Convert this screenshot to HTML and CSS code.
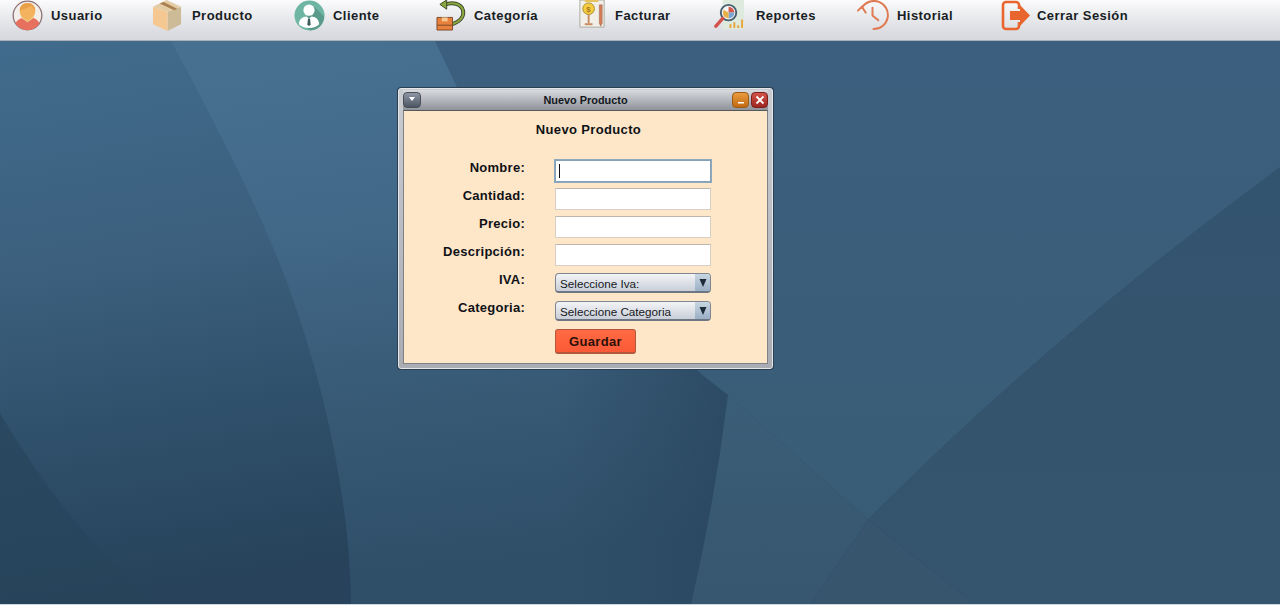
FILE: index.html
```html
<!DOCTYPE html>
<html lang="es">
<head>
<meta charset="utf-8">
<title>Nuevo Producto</title>
<link rel="stylesheet" href="styles.css">
</head>
<body>
<header class="menubar">
  <a class="menu-item"><svg class="icon" viewBox="0 0 32 32"><circle cx="16" cy="16" r="14.8" fill="#f3eee9" stroke="#8b6f72" stroke-width="1.300"/><path d="M3.500 24c2-4 6-5 8-6h9c3 1 6 2 8 6a14.500 14.500 0 0 1-25 0z" fill="#e8705f"/><path d="M9 18l7 5 7-5-2-3H11z" fill="#efd08f"/><path d="M8 11c0-5 3.500-8 8-8s8 3 8 8c0 3-1 5-2 6l-6 5-6-5c-1-1-2-3-2-6z" fill="#f3b25e"/><path d="M8 11c0-5 3.500-8 8-8s8 3 8 8c-2-2-3-4-4-5-3 2-8 3-12 5z" fill="#e99f48"/></svg><span>Usuario</span></a>
  <a class="menu-item menu-gap-9"><svg class="icon" viewBox="0 0 32 32"><path d="M16 12l14-5v18l-14 7z" fill="#cdbb98"/><path d="M16 12L1 7v18l15 7z" fill="#f6c891"/><path d="M1 7l14-7 15 7-14 5z" fill="#e3cba4"/><path d="M8 3.500l15 7 3-1.500-14-7z" fill="#a9804f"/></svg><span>Producto</span></a>
  <a class="menu-item"><svg class="icon" viewBox="0 0 32 32"><circle cx="16" cy="16" r="15.500" fill="#6fb5a3"/><path d="M21 7l10 10c0 8-6 14-14 14.500L8 24z" fill="#5a9a8b"/><circle cx="15.500" cy="10.500" r="5.800" fill="#fff"/><path d="M5 25c0-5 4-8 8-8l2.500 2 2.500-2c4 0 8 3 8 8-2 2-6 4-10.500 4S7 27 5 25z" fill="#fff"/><path d="M14.500 19h2l.7 6-1.700 2-1.700-2z" fill="#3d5c5c"/></svg><span>Cliente</span></a>
  <a class="menu-item menu-gap-7"><svg class="icon" viewBox="0 0 32 32"><path d="M9 5c7-3 17-2 19 6 1 6-3 11-11 14" fill="none" stroke="#3f4a2c" stroke-width="4"/><path d="M9 5c7-3 17-2 19 6 1 6-3 11-11 14" fill="none" stroke="#8ba83f" stroke-width="2"/><path d="M11 0L4 4.500l7 5z" fill="#8ba83f" stroke="#3f4a2c"/><path d="M1 18h16v13H1z" fill="#e9813c" stroke="#7b4a2b"/><path d="M1 26h16" stroke="#7b4a2b"/><path d="M6 18h6v4H6z" fill="#f6c891"/></svg><span>Categoría</span></a>
  <a class="menu-item menu-gap-7"><svg class="icon" viewBox="0 0 32 32"><path d="M3 0h25v28H3z" fill="#f2efe8" stroke="#a9a9a0"/><path d="M8 0h14v2H8z" fill="#e6c25a"/><circle cx="12" cy="9" r="6" fill="#f3cc3f" stroke="#a98d30"/><text class="coin" x="12" y="12" text-anchor="middle">$</text><path d="M11 15h2v9h-2z" fill="#c98b62"/><path d="M8 24h8v2H8z" fill="#c98b62"/><path d="M23 5h3v19l-1.500 3-1.500-3z" fill="#d77a56" stroke="#8a6a55" stroke-width=".5"/></svg><span>Facturar</span></a>
  <a class="menu-item menu-gap-11"><svg class="icon" viewBox="0 0 32 32"><path d="M9 0h22v30H9z" fill="#dfeadf"/><path d="M17 25v4M21 23v6M25 26v3M29 20v9" stroke="#e8a33d" stroke-width="2"/><circle cx="15" cy="13" r="8" fill="#f5f6f8" stroke="#49606f" stroke-width="2"/><path d="M15 13V7a6 6 0 0 1 6 6z" fill="#d7574a"/><path d="M15 13h6a6 6 0 0 1-6 6z" fill="#7aa6cf"/><path d="M15 13v6a6 6 0 0 1-5-9z" fill="#eab04a"/><path d="M9 19l-7 8" stroke="#d2534c" stroke-width="3.500" stroke-linecap="round"/></svg><span>Reportes</span></a>
  <a class="menu-item"><svg class="icon icon-wide" viewBox="0 0 32 32"><path d="M5 8A14.500 14.500 0 1 1 17 30" fill="none" stroke="#e07a52" stroke-width="2" stroke-linecap="round"/><path d="M1 11l4-4 4 6" fill="none" stroke="#e07a52" stroke-width="2" stroke-linecap="round"/><path d="M16 8v8l6 5" fill="none" stroke="#e07a52" stroke-width="2" stroke-linecap="round"/></svg><span>Historial</span></a>
  <a class="menu-item menu-gap-7"><svg class="icon icon-narrow" viewBox="0 0 29 31"><path d="M18 9V5a3 3 0 0 0-3-3H5a3 3 0 0 0-3 3v21a3 3 0 0 0 3 3h10a3 3 0 0 0 3-3v-4" fill="none" stroke="#e8662e" stroke-width="2.600"/><path d="M9 11h10V5l10 10.500L19 26v-6H9z" fill="#e8662e"/></svg><span>Cerrar Sesión</span></a>
</header>
<main class="desktop">
  <svg class="wallpaper" viewBox="0 0 1280 563" preserveAspectRatio="none">
    <defs>
      <linearGradient id="base" gradientUnits="userSpaceOnUse" x1="0" y1="0" x2="90" y2="563">
        <stop offset="0" stop-color="#416b8c"/>
        <stop offset="0.4" stop-color="#3c607e"/>
        <stop offset="0.7" stop-color="#2f506b"/>
        <stop offset="1" stop-color="#27425a"/>
      </linearGradient>
      <linearGradient id="mid" gradientUnits="userSpaceOnUse" x1="0" y1="0" x2="60" y2="563">
        <stop offset="0" stop-color="#487191"/>
        <stop offset="0.4" stop-color="#426888"/>
        <stop offset="0.65" stop-color="#395c78"/>
        <stop offset="1" stop-color="#2f4f69"/>
      </linearGradient>
      <linearGradient id="shade" gradientUnits="userSpaceOnUse" x1="560" y1="0" x2="728" y2="0">
        <stop offset="0" stop-color="#294660" stop-opacity="0"/>
        <stop offset="1" stop-color="#294660" stop-opacity="0.75"/>
      </linearGradient>
      <linearGradient id="upper" gradientUnits="userSpaceOnUse" x1="0" y1="0" x2="0" y2="480">
        <stop offset="0" stop-color="#3c5f7f"/>
        <stop offset="1" stop-color="#395c76"/>
      </linearGradient>
      <linearGradient id="band" gradientUnits="userSpaceOnUse" x1="0" y1="354" x2="0" y2="563">
        <stop offset="0" stop-color="#3b5e78"/>
        <stop offset="1" stop-color="#37566f"/>
      </linearGradient>
      <linearGradient id="lower" gradientUnits="userSpaceOnUse" x1="0" y1="126" x2="0" y2="563">
        <stop offset="0" stop-color="#33546f"/>
        <stop offset="1" stop-color="#35546d"/>
      </linearGradient>
    </defs>
    <rect width="1280" height="563" fill="url(#base)"/>
    <path d="M171 0C225 100 270 190 294 261 325 350 350 460 351 563H691Q715 460 728 354L705 336Q560 210 457 46L435 0z" fill="url(#mid)"/>
    <path d="M351 563H691Q715 460 728 354L705 336Q640 280 560 190L500 563z" fill="url(#shade)"/>
    <path d="M435 0H1280V126Q1050 295 868 479L728 354 705 336Q560 210 457 46z" fill="url(#upper)"/>
    <path d="M728 354L868 479 811 563H691Q715 460 728 354z" fill="url(#band)"/>
    <path d="M1280 126Q1050 295 868 479L975 563H1280z" fill="url(#lower)"/>
    <path d="M868 479L811 563H975z" fill="#37566e"/>
    <path d="M0 372Q70 490 155 563H0z" fill="#27445a" fill-opacity="0.6"/>
  </svg>
  <section class="window">
    <div class="titlebar">
      <div class="title-side"><button class="win-btn win-menu"><svg viewBox="0 0 10 6"><path d="M2 0h6L5 4z" fill="#fff"/></svg></button></div>
      <span class="win-title">Nuevo Producto</span>
      <div class="title-side title-side-end">
        <button class="win-btn win-min"><svg viewBox="0 0 10 10"><path d="M2 7h6v1.500H2z" fill="#fff"/></svg></button>
        <button class="win-btn win-close"><svg viewBox="0 0 10 10"><path d="M1.500 1.500l7 7m0-7l-7 7" stroke="#fff" stroke-width="1.800"/></svg></button>
      </div>
    </div>
    <div class="win-body">
      <h1 class="form-title">Nuevo Producto</h1>
      <form class="form-grid">
        <label class="form-label">Nombre:</label>
        <div class="field field-focus"><span class="caret"></span></div>
        <label class="form-label">Cantidad:</label>
        <div class="field"></div>
        <label class="form-label">Precio:</label>
        <div class="field"></div>
        <label class="form-label">Descripción:</label>
        <div class="field"></div>
        <label class="form-label">IVA:</label>
        <div class="select"><span class="select-text">Seleccione Iva:</span><span class="select-arrow"><svg viewBox="0 0 8 8"><path d="M0.500 0h7L4 8z" fill="#1d2a38"/></svg></span></div>
        <label class="form-label">Categoria:</label>
        <div class="select"><span class="select-text">Seleccione Categoria</span><span class="select-arrow"><svg viewBox="0 0 8 8"><path d="M0.500 0h7L4 8z" fill="#1d2a38"/></svg></span></div>
        <span></span>
        <button class="save" type="button">Guardar</button>
      </form>
    </div>
  </section>
</main>
<div class="page-end"></div>
</body>
</html>
```
FILE: styles.css
```css
* { box-sizing: border-box; }
html, body { height: 609px; }
body {
  margin: 0;
  display: flex;
  flex-direction: column;
  overflow: hidden;
  font-family: "Liberation Sans", Arial, sans-serif;
  background: #fff;
}
.menubar {
  height: 41px;
  flex: none;
  display: grid;
  grid-template-columns: 140px 142px 142px 141px 137px 142px 145px 200px;
  align-items: start;
  padding-left: 12px;
  background: linear-gradient(#fbfbfc 0%, #eeeff1 30%, #dcdde2 80%, #d6d8de 100%);
  border-bottom: 1px solid #a9b0b7;
}
.menu-item {
  display: flex;
  align-items: center;
  gap: 8px;
  font-size: 13px;
  font-weight: 700;
  letter-spacing: 0.45px;
  color: #181d24;
}
.menu-gap-7 { gap: 7px; }
.menu-gap-9 { gap: 9px; }
.menu-gap-11 { gap: 11px; }
.icon { width: 31px; height: 31px; flex: none; }
.icon-wide { width: 33px; }
.icon-narrow { width: 29px; }
.coin { font: 700 8px "Liberation Sans", Arial, sans-serif; fill: #a9761f; }
.desktop { position: relative; flex: 1; overflow: hidden; }
.wallpaper { position: absolute; inset: 0; width: 100%; height: 100%; display: block; }
.window {
  position: absolute;
  left: 398px;
  top: 47px;
  width: 375px;
  height: 281px;
  padding: 1px 4px 4px;
  display: flex;
  flex-direction: column;
  background: linear-gradient(#c9ccd1, #a9adb3);
  border: 1px solid #e4e6e9;
  border-radius: 3px;
  box-shadow: 0 0 0 1px #2b3f52;
}
.titlebar {
  height: 20px;
  flex: none;
  display: grid;
  grid-template-columns: 1fr auto 1fr;
  align-items: center;
  background: linear-gradient(#d8dade, #8f939a);
}
.title-side { display: flex; gap: 2px; }
.title-side-end { justify-content: flex-end; }
.win-btn {
  width: 17px;
  height: 16px;
  padding: 0;
  display: flex;
  align-items: center;
  justify-content: center;
  border: 1px solid #4a4f57;
  border-radius: 4px;
}
.win-btn svg { width: 10px; height: 10px; display: block; }
.win-menu { width: 18px; background: linear-gradient(#8f97a6, #4d5462); }
.win-min { background: linear-gradient(#e99a3f, #c26a12); border-color: #9c5c16; }
.win-close { background: linear-gradient(#d2544a, #9c2620); border-color: #7e1f1b; }
.win-title {
  font-size: 10.900px;
  font-weight: 700;
  color: #14181d;
}
.win-body {
  flex: 1;
  background: #fee6c9;
  border: 1px solid #7d8287;
  border-top-color: #55595e;
  padding-top: 11px;
}
.form-title {
  margin: 0 0 22px;
  padding-left: 6px;
  height: 16px;
  line-height: 16px;
  text-align: center;
  font-size: 13px;
  font-weight: 700;
  letter-spacing: 0.35px;
  color: #0f1216;
}
.form-grid {
  display: grid;
  grid-template-columns: 121px 156px;
  grid-auto-rows: 22px;
  row-gap: 6px;
  column-gap: 30px;
}
.form-label {
  font-size: 13px;
  line-height: 15px;
  font-weight: 700;
  letter-spacing: 0.27px;
  text-align: right;
  color: #0f1216;
}
.field {
  background: #fff;
  border: 1px solid #d6cfc3;
  border-top-color: #bdb7ab;
  display: flex;
  align-items: center;
  padding-left: 3px;
}
.field-focus {
  border: 1px solid #86a2b8;
  box-shadow: 0 0 0 1px #8ea9bd;
}
.caret { width: 1px; height: 14px; background: #111; }
.select {
  height: 20px;
  margin-top: 1px;
  display: flex;
  background: linear-gradient(#f3f4f6, #c9ced8);
  border: 1px solid #7d8691;
  border-bottom: 2px solid #6d7682;
  border-radius: 4px;
  overflow: hidden;
}
.select-text {
  flex: 1;
  font-size: 11.700px;
  line-height: 19px;
  padding-left: 4px;
  color: #16191d;
}
.select-arrow {
  width: 15px;
  display: flex;
  align-items: center;
  justify-content: center;
  background: linear-gradient(#c9d6e2, #9bb0c6);
}
.select-arrow svg { width: 8px; height: 8px; display: block; }
.save {
  width: 81px;
  height: 25px;
  margin-top: 1px;
  padding: 0;
  font: 700 13px "Liberation Sans", Arial, sans-serif;
  letter-spacing: 0.35px;
  color: #2b1008;
  background: linear-gradient(#ff6a44, #fb5a36);
  border: 1px solid #b4583d;
  border-bottom-width: 2px;
  border-radius: 3px;
}
.page-end {
  height: 5px;
  flex: none;
  background: #fff;
  border-top: 1px solid #cdd6dc;
}
```
